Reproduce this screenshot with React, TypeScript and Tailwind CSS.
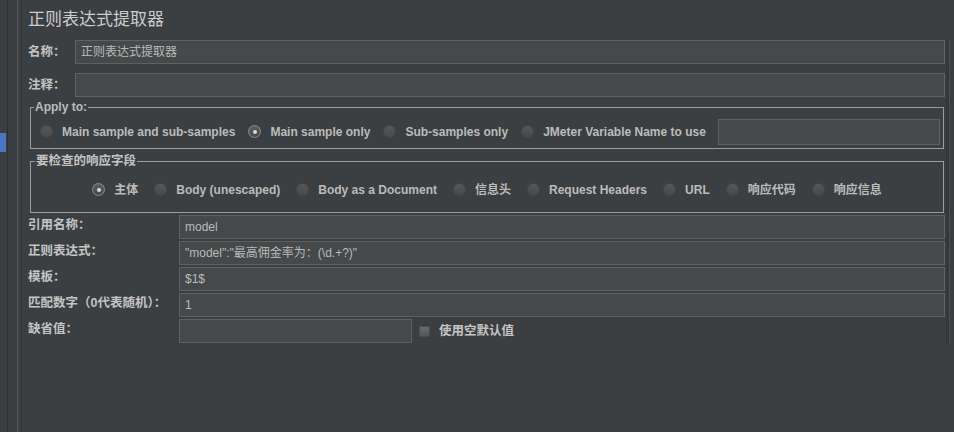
import React from "react";

const cjk = '"Liberation Sans", "Noto Sans CJK SC", sans-serif';

function Radio({ checked, label }: { checked?: boolean; label: string }) {
  return (
    <div className="flex items-center">
      <span
        className={`flex h-[13px] w-[13px] items-center justify-center rounded-full ${
          checked
            ? "border border-[#8a8d8f] bg-gradient-to-b from-[#5c5f61] to-[#47494b]"
            : "border border-[#46494b] bg-gradient-to-b from-[#55585a] to-[#47494b]"
        }`}
      >
        {checked && <span className="h-[4px] w-[4px] rounded-full bg-[#d8d8d8]" />}
      </span>
      <span className="ml-[9px] text-[12px] font-bold text-[#bbbbbb]">{label}</span>
    </div>
  );
}

function Field({ value, className = "" }: { value?: string; className?: string }) {
  return (
    <div
      className={`flex h-[24px] items-center border border-[#5e6163] bg-[#45494a] pl-[5px] text-[12px] text-[#bbbbbb] ${className}`}
    >
      {value}
    </div>
  );
}

function Row({ label, value, children }: { label: string; value?: string; children?: React.ReactNode }) {
  return (
    <div className="flex h-[24px]">
      <div className="w-[151px] shrink-0 text-[12.5px] font-bold leading-[20px] text-[#c4c4c4]">{label}</div>
      {children ?? <Field value={value} className="flex-1" />}
    </div>
  );
}

export default function App() {
  const fields = [
    { label: "引用名称：", value: "model" },
    { label: "正则表达式：", value: "\"model\":\"最高佣金率为：(\\d.+?)\"" },
    { label: "模板：", value: "$1$" },
    { label: "匹配数字（0代表随机）：", value: "1" },
  ];

  return (
    <div className="flex h-[432px] w-[954px] overflow-hidden bg-[#3c3f41]" style={{ fontFamily: cjk }}>
      {/* left tree edge */}
      <div className="w-[7px] shrink-0">
        <div className="mt-[133px] h-[19px] w-[6px] bg-[#4a75c4]" />
      </div>
      <div className="w-[1px] shrink-0 bg-[#2e3032]" />
      <div className="w-[9px] shrink-0" />
      <div className="w-[1px] shrink-0 bg-[#55585a]" />
      <div className="w-[3px] shrink-0" />
      <div className="w-[1px] shrink-0 bg-[#323436]" />

      <div className="flex flex-1 flex-col pl-[6px] pr-[1px]">
        <div className="mt-[8px] text-[17px] leading-[24px] text-[#cccccc]">正则表达式提取器</div>

        <div className="mt-[8px] flex h-[24px]">
          <div className="w-[47px] shrink-0 text-[12.5px] font-bold leading-[24px] text-[#c4c4c4]">名称：</div>
          <Field value="正则表达式提取器" className="flex-1" />
        </div>
        <div className="mt-[9px] flex h-[24px]">
          <div className="w-[47px] shrink-0 text-[12.5px] font-bold leading-[24px] text-[#c4c4c4]">注释：</div>
          <Field className="flex-1" />
        </div>

        {/* Apply to */}
        <div className="relative ml-[2px] mr-[1px] mt-[10px] h-[42px] border border-[#9a9c9d]">
          <span className="absolute -top-[8px] left-[3px] bg-[#3c3f41] px-[1px] text-[12px] font-bold leading-[14px] text-[#bbbbbb]">
            Apply to:
          </span>
          <div className="flex h-full items-center gap-[13px] pl-[9px] pr-[3px] pt-[7px]">
            <Radio label="Main sample and sub-samples" />
            <Radio checked label="Main sample only" />
            <Radio label="Sub-samples only" />
            <Radio label="JMeter Variable Name to use" />
            <div className="-ml-[1px] h-[26px] flex-1 border border-[#5e6163] bg-[#45494a]" />
          </div>
        </div>

        {/* response field */}
        <div className="relative ml-[2px] mr-[1px] mt-[12px] h-[52px] border border-[#9a9c9d]">
          <span className="absolute -top-[9px] left-[4px] bg-[#3c3f41] px-[1px] text-[12.5px] font-bold leading-[16px] text-[#c4c4c4]">
            要检查的响应字段
          </span>
          <div className="flex h-full items-center justify-center gap-[16px] pt-[5px]">
            <Radio checked label="主体" />
            <Radio label="Body (unescaped)" />
            <Radio label="Body as a Document" />
            <Radio label="信息头" />
            <Radio label="Request Headers" />
            <Radio label="URL" />
            <Radio label="响应代码" />
            <Radio label="响应信息" />
          </div>
        </div>

        <div className="mt-[2px] flex flex-col gap-[2px]">
          {fields.map((f) => (
            <Row key={f.label} label={f.label} value={f.value} />
          ))}
          <Row label="缺省值：">
            <div className="flex flex-1 items-center">
              <Field className="w-[233px]" />
              <span className="ml-[7px] h-[11px] w-[11px] border border-[#4a4d4f] bg-gradient-to-b from-[#6a6d6f] to-[#54575a]" />
              <span className="ml-[9px] text-[12.5px] font-bold text-[#c4c4c4]">使用空默认值</span>
            </div>
          </Row>
        </div>
      </div>

      {/* right edge */}
      <div className="flex w-[8px] shrink-0">
        <div className="mt-[40px] h-[304px] w-[3px] bg-[#35383a]" />
        <div className="mt-[40px] h-[304px] w-[1px] bg-[#4c4f51]" />
      </div>
    </div>
  );
}
